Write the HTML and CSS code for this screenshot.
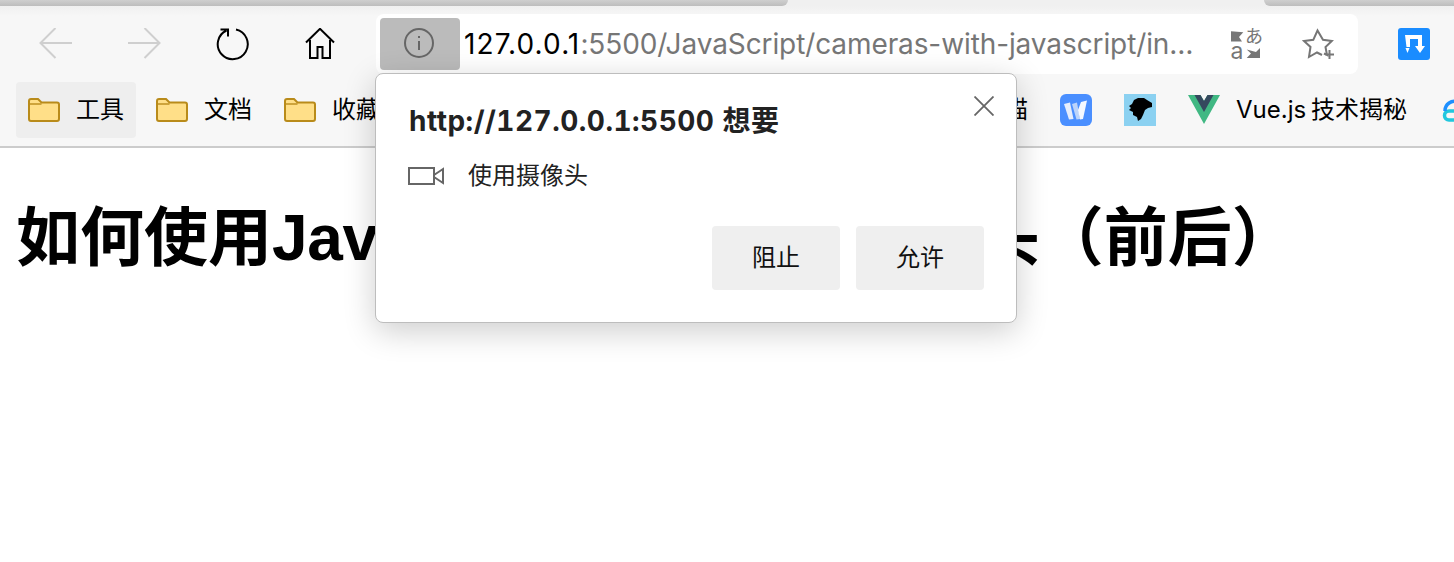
FILE: index.html
```html
<!DOCTYPE html>
<html lang="zh-CN">
<head>
<meta charset="utf-8">
<title>摄像头</title>
<link rel="stylesheet" href="styles.css">
</head>
<body>
<div class="tabstrip">
  <div class="tab tab-left"></div>
  <div class="tab-active"></div>
  <div class="tab tab-right"></div>
</div>
<div class="toolbar">
  <button class="tool">
    <svg class="ico-arrow" width="34" height="32" viewBox="0 0 34 32"><path d="M33 15H1.500M16.500 0 1.500 15l15 15"/></svg>
  </button>
  <button class="tool">
    <svg class="ico-arrow" width="34" height="32" viewBox="0 0 34 32"><path d="M1 15h31.500M17.500 0l15 15-15 15"/></svg>
  </button>
  <button class="tool">
    <svg class="ico-reload" width="34" height="34" viewBox="0 0 34 34"><path d="M21 2.500A15 15 0 1 1 11.500 3.500M5.500 2.500H13V9.500"/></svg>
  </button>
  <button class="tool">
    <svg class="ico-black" width="30" height="32" viewBox="0 0 30 32"><path d="M1 14.500 15 .8l14 13.700M5 12V30h7.500V19h5V30H25V12"/></svg>
  </button>
  <div class="urlbar">
    <div class="site-info">
      <svg class="ico-info" width="32" height="32" viewBox="0 0 32 32"><circle cx="16" cy="16" r="14"/><path d="M16 14v9M16 9v2"/></svg>
    </div>
    <div class="url"><span class="url-host">127.0.0.1</span>:5500/JavaScript/cameras-with-javascript/index.html</div>
    <button class="url-action">
      <svg class="ico-translate" width="32" height="32" viewBox="0 0 32 32">
        <path class="fill-gray" d="M1 3.300 13.300 4.300 9 9 12 13.500H1ZM30 20V30H16.700L21 25.500 16.700 21.500 26 24Z"/>
        <text class="glyph-a" x="0.500" y="31">a</text>
        <text class="glyph-kana" x="15" y="15">あ</text>
      </svg>
    </button>
    <button class="url-action">
      <svg class="ico-star" width="32" height="32" viewBox="0 0 32 32"><path d="M22 25.500 25 27 23.500 19 29.800 13 21 11.800 15.500 2.500 11.300 11.800 2 13 8.500 19 7 29 15 24.500 20 27M23 26.500H32M27.500 22V31"/></svg>
    </button>
  </div>
  <button class="tool">
    <svg width="32" height="32" viewBox="0 0 32 32">
      <rect width="32" height="32" rx="3" fill="#1a8cff"/>
      <path fill="#fff" d="M7 7H24V18H27L22 25 17 18H20V11H12V19H8.500Z"/>
      <path fill="#fff" d="M7.500 20H11.500L9.500 25Z"/>
    </svg>
  </button>
</div>
<div class="bookmarks">
  <div class="bm bm-active"><svg class="folder" viewBox="0 0 32 24"><use href="#folder"/></svg><span>工具</span></div>
  <div class="bm"><svg class="folder" viewBox="0 0 32 24"><use href="#folder"/></svg><span>文档</span></div>
  <div class="bm"><svg class="folder" viewBox="0 0 32 24"><use href="#folder"/></svg><span>收藏夹</span></div>
  <div class="bm"><svg class="folder" viewBox="0 0 32 24"><use href="#folder"/></svg><span>学习</span></div>
  <div class="bm"><svg class="folder" viewBox="0 0 32 24"><use href="#folder"/></svg><span>前端</span></div>
  <div class="bm"><svg class="folder" viewBox="0 0 32 24"><use href="#folder"/></svg><span>工作</span></div>
  <div class="bm bm-wide"><svg class="folder" viewBox="0 0 32 24"><use href="#folder"/></svg><span>扫描</span></div>
  <div class="bm">
    <svg class="favicon" viewBox="0 0 32 32">
      <rect width="32" height="32" rx="6" fill="#4a8fff"/>
      <path fill="#e6eefc" d="M4 10 10 8.500 13.500 25 9 25.500Z"/>
      <path fill="#bcd4fa" d="M12 10 17 8.500 20 25 16.500 25.500Z"/>
      <path fill="#f4f8ff" d="M21 8 27 6.500 23 25 20 25.500 18 16Z"/>
    </svg>
  </div>
  <div class="bm">
    <svg class="favicon" viewBox="0 0 32 32">
      <rect width="32" height="32" fill="#8bd1f1"/>
      <path fill="#000" d="M5 12 8 10 10 6 14 4 20 4 23 6 28 9 28 13 24 14 21 16 19 21 17 25 14 27 13 23 9 21 9 18 5 16 7 14Z"/>
    </svg>
  </div>
  <div class="bm bm-vue">
    <svg class="favicon" viewBox="0 0 32 30">
      <path fill="#41b883" d="M0 0H12.500L16 6 19.500 0H32L16 29Z"/>
      <path fill="#35495e" d="M6.500 0H12.500L16 6 19.500 0H25.500L16 17Z"/>
    </svg>
    <span class="bm-latin">Vue.js 技术揭秘</span>
  </div>
  <div class="bm">
    <svg class="favicon" viewBox="0 0 32 32"><path class="cloud-b" d="M18 17H10A4.500 4.500 0 0 0 10 26H24"/><path class="cloud-a" d="M6 17A9.500 9.500 0 0 1 19 8"/></svg>
  </div>
</div>
<main class="page">
  <h1>如何使用<span class="h1-latin">JavaScript</span>访问设备摄像头（前后）</h1>
</main>
<section class="popup">
  <button class="popup-close">
    <svg class="ico-close" width="20" height="20" viewBox="0 0 20 20"><path d="M.5.500l19 19M19.500.500l-19 19"/></svg>
  </button>
  <div class="popup-title">http://127.0.0.1:5500 想要</div>
  <div class="popup-row">
    <svg class="ico-camera" width="36" height="20" viewBox="0 0 36 20"><path d="M1 2H26V18H1ZM26 9 35 3V17L26 11"/></svg>
    <span>使用摄像头</span>
  </div>
  <div class="popup-actions">
    <button class="popup-btn">阻止</button>
    <button class="popup-btn">允许</button>
  </div>
</section>
<svg class="defs" width="0" height="0">
  <symbol id="folder" viewBox="0 0 32 24">
    <path fill="#ffdf88" stroke="#b98b1a" stroke-width="2" d="M1 3A2 2 0 0 1 3 1H10L13.500 4.500H29A2 2 0 0 1 31 6.500V21A2 2 0 0 1 29 23H3A2 2 0 0 1 1 21Z"/>
    <path fill="none" stroke="#b98b1a" stroke-width="1.400" d="M1 6H13.500"/>
  </symbol>
</svg>
</body>
</html>
```
FILE: styles.css
```css
* { box-sizing: border-box; }
html, body { margin: 0; padding: 0; }
body {
  width: 1454px;
  height: 562px;
  overflow: hidden;
  position: relative;
  background: #fff;
  color: #000;
  font-family: Inter, "Noto Sans CJK SC", sans-serif;
}
button { border: 0; padding: 0; margin: 0; background: none; font: inherit; color: inherit; }
svg { display: block; flex: none; }

.tabstrip { display: flex; height: 6px; background: #f0f0f0; }
.tab { background: linear-gradient(#cfcfcf, #bdbdbd); }
.tab-left { width: 788px; border-bottom-right-radius: 8px; }
.tab-active { flex: 1; }
.tab-right { width: 190px; border-bottom-left-radius: 8px; }

.toolbar {
  display: flex;
  height: 72px;
  padding: 8px 0 4px 12px;
  background: linear-gradient(#f0f0f0, #f7f7f7 10px);
  overflow: hidden;
}
.tool { flex: none; width: 88px; display: flex; align-items: center; justify-content: center; }
.ico-arrow { fill: none; stroke: #cfcfcf; stroke-width: 2; }
.ico-black { fill: none; stroke: #000; stroke-width: 2; }
.ico-reload { fill: none; stroke: #000; stroke-width: 2; }

.urlbar {
  flex: none;
  width: 982px;
  margin: 0 12px;
  padding: 4px;
  display: flex;
  align-items: stretch;
  background: #fff;
  border-radius: 8px;
}
.site-info {
  flex: none;
  width: 80px;
  padding: 0 2px 2px 0;
  display: flex;
  align-items: center;
  justify-content: center;
  background: #bbb;
  border-radius: 4px;
}
.ico-info { fill: none; stroke: #666; stroke-width: 2; }
.url {
  flex: 1;
  min-width: 0;
  margin-left: 4px;
  padding-right: 12px;
  font-size: 28px;
  line-height: 52px;
  letter-spacing: -.1px;
  color: #767676;
  white-space: nowrap;
  overflow: hidden;
  text-overflow: ellipsis;
}
.url-host { color: #000; letter-spacing: 1.1px; }
.url-action { flex: none; width: 72px; display: flex; align-items: center; justify-content: center; }
.ico-translate { overflow: visible; }
.fill-gray { fill: #767676; }
.glyph-a { font-family: Inter, sans-serif; font-size: 23px; fill: #767676; }
.glyph-kana { font-family: "Noto Sans CJK JP", sans-serif; font-size: 18px; fill: #767676; }
.ico-star { fill: none; stroke: #767676; stroke-width: 2; }

.bookmarks {
  display: flex;
  gap: 8px;
  height: 70px;
  padding: 4px 0 8px 16px;
  background: #f7f7f7;
  border-bottom: 2px solid #ccc;
  overflow: hidden;
  font-size: 24px;
}
.bm {
  flex: none;
  display: flex;
  align-items: center;
  gap: 16px;
  padding: 0 12px;
  border-radius: 4px;
  white-space: nowrap;
}
.bm span { line-height: 1; }
.bm-active { background: #eee; }
.bm-wide { width: 232px; justify-content: space-between; }
.folder { width: 32px; height: 24px; }
.favicon { width: 32px; height: 32px; }
.bm-latin { word-spacing: -2px; }
.cloud-a, .cloud-b { fill: none; stroke-width: 3.500; }
.cloud-a { stroke: #1e90ff; }
.cloud-b { stroke: #21c7de; }

.page { padding: 0 16px; }
h1 {
  margin: 38px 0;
  font-family: "Liberation Sans", "Noto Sans CJK SC", sans-serif;
  font-size: 64px;
  font-weight: 700;
  white-space: nowrap;
}
.h1-latin { letter-spacing: -.4px; }

.popup {
  position: absolute;
  left: 375px;
  top: 73px;
  width: 642px;
  height: 250px;
  padding: 32px;
  display: flex;
  flex-direction: column;
  background: #fff;
  border: 1px solid #bdbdbd;
  border-radius: 8px;
  box-shadow: 0 8px 32px rgba(0, 0, 0, .2);
  color: #222;
}
.popup-close { position: absolute; left: 598px; top: 22px; }
.ico-close { fill: none; stroke: #666; stroke-width: 1.800; }
.popup-title {
  margin-left: 1px;
  font-size: 28px;
  font-weight: 700;
  line-height: 30px;
  letter-spacing: .5px;
  font-variant-numeric: tabular-nums;
}
.popup-row {
  display: flex;
  align-items: center;
  gap: 24px;
  margin-top: 25px;
  font-size: 24px;
  line-height: 30px;
}
.ico-camera { fill: none; stroke: #666; stroke-width: 2; }
.popup-actions { margin-top: auto; display: flex; justify-content: flex-end; gap: 16px; }
.popup-btn { width: 128px; height: 64px; padding-bottom: 5px; background: #efefef; border-radius: 4px; font-size: 24px; color: #111; }
.defs { position: absolute; }
```
